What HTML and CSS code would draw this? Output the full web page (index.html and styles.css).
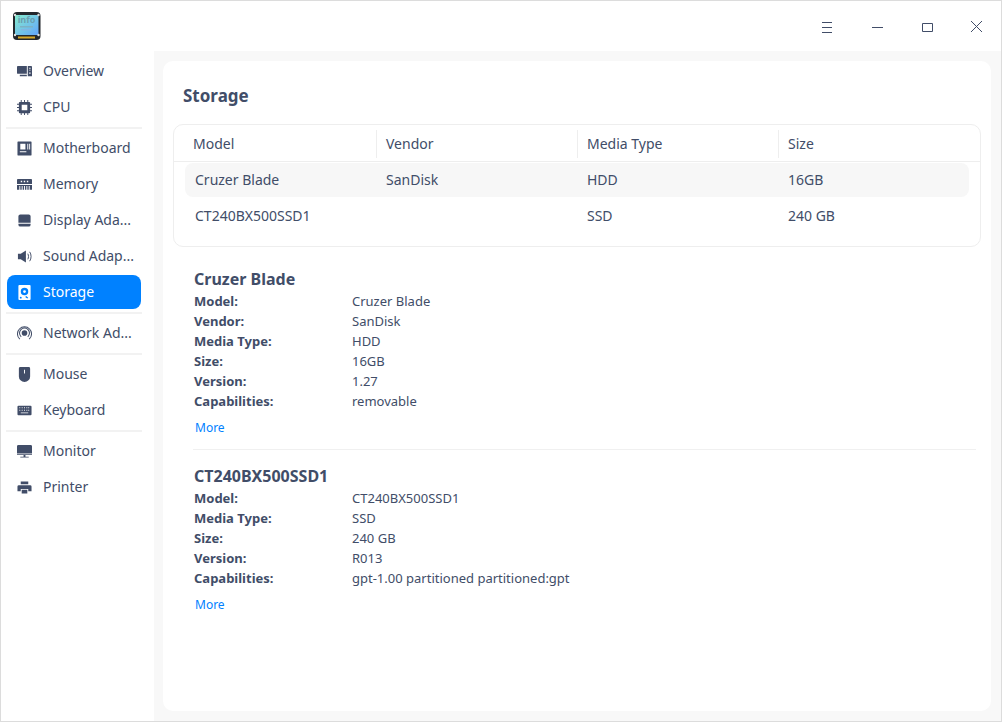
FILE: index.html
```html
<!DOCTYPE html>
<html lang="en">
<head>
    <meta charset="UTF-8">
    <title>Device Manager</title>
    <link rel="stylesheet" href="styles.css">
</head>
<body>
    <div class="window">
        <header class="titlebar">
            <svg class="app-icon" width="30" height="30" viewBox="0 0 30 30">
                <defs>
                    <linearGradient id="screen" x1="0" y1="0" x2="1" y2="1">
                        <stop offset="0" stop-color="#86ecd0"/>
                        <stop offset="1" stop-color="#62a4fb"/>
                    </linearGradient>
                </defs>
                <rect x="1" y="1" width="27.500" height="28" rx="4" fill="#23272c"/>
                <rect x="3" y="4" width="23.500" height="20" fill="url(#screen)"/>
                <text x="14.500" y="12" text-anchor="middle" class="app-icon-text">info</text>
                <rect x="8" y="15" width="13" height="1.500" fill="#7db2c4"/>
                <rect x="9" y="18" width="10" height="1.500" fill="#82b6e2"/>
                <rect x="6" y="25.500" width="17" height="2" fill="#d9a928"/>
                <circle cx="3" cy="4" r="1.200" fill="#ddd"/>
                <circle cx="26.500" cy="4" r="1.200" fill="#ddd"/>
                <circle cx="3" cy="24" r="1.200" fill="#ddd"/>
                <circle cx="26.500" cy="24" r="1.200" fill="#ddd"/>
            </svg>
            <div class="window-buttons">
                <button class="win-btn">
                    <svg width="16" height="16" viewBox="0 0 16 16"><path d="M4 4.500h10M4 9.500h10M4 14.500h10" class="win-line"/></svg>
                </button>
                <button class="win-btn">
                    <svg width="16" height="16" viewBox="0 0 16 16"><path d="M4 9.500h11" class="win-line"/></svg>
                </button>
                <button class="win-btn">
                    <svg width="16" height="16" viewBox="0 0 16 16"><path d="M4.500 5.500h10v8h-10z" class="win-line"/></svg>
                </button>
                <button class="win-btn">
                    <svg width="16" height="16" viewBox="0 0 16 16"><path d="M3 3l11 11M14 3L3 14" class="win-line"/></svg>
                </button>
            </div>
        </header>
        <div class="body">
            <nav class="sidebar">
                <a class="nav-item">
                    <svg class="nav-icon" viewBox="0 0 16 16"><path fill-rule="evenodd" d="M0 3a1 1 0 0 1 1-1h9.500v8.500H1a1 1 0 0 1-1-1zM3 11.500h7.500v1.500H3zM11.500 2H15a1 1 0 0 1 1 1v10h-4.500zm1.500 2v1h1.500V4zm0 2v1h1.500V6zm0 3v1.500h1.500V9z"/></svg>
                    <span>Overview</span>
                </a>
                <a class="nav-item">
                    <svg class="nav-icon" viewBox="0 0 16 16"><path fill-rule="evenodd" d="M3 2h10a1 1 0 0 1 1 1v10a1 1 0 0 1-1 1H3a1 1 0 0 1-1-1V3a1 1 0 0 1 1-1zm2 3v6h6V5zM4 0h1v2H4zM7.500 0h1v2h-1zM11 0h1v2h-1zM4 14h1v2H4zM7.500 14h1v2h-1zM11 14h1v2h-1zM0 4h2v1H0zM0 7.500h2v1H0zM0 11h2v1H0zM14 4h2v1h-2zM14 7.500h2v1h-2zM14 11h2v1h-2z"/></svg>
                    <span>CPU</span>
                </a>
                <div class="nav-sep"></div>
                <a class="nav-item">
                    <svg class="nav-icon" viewBox="0 0 16 16"><path fill-rule="evenodd" d="M1 .500h14a.5.500 0 0 1 .500.500v14a.5.500 0 0 1-.500.500H1a.5.500 0 0 1-.500-.500V1A.5.500 0 0 1 1 .500zM3.500 3v6H9V3zM11 3v6h1V3zm2 0v6h1V3zM3 11v1h7v-1z"/></svg>
                    <span>Motherboard</span>
                </a>
                <a class="nav-item">
                    <svg class="nav-icon" viewBox="0 0 16 16"><path fill-rule="evenodd" d="M1 2h14a1 1 0 0 1 1 1v10.500H0V3a1 1 0 0 1 1-1zm3 2v1.500h1.500V4zm3.200 0v1.500h1.500V4zm3.300 0v1.500H12V4zM0 7.500v1h16v-1zm2.500 2v4h1v-4zm2.500 0v4h1v-4zm2.500 0v4h1v-4zm2.500 0v4h1v-4zm2.500 0v4h1v-4z"/></svg>
                    <span>Memory</span>
                </a>
                <a class="nav-item">
                    <svg class="nav-icon" viewBox="0 0 16 16"><path fill-rule="evenodd" d="M3.500 1.500h9a2 2 0 0 1 2 2v9a2 2 0 0 1-2 2h-9a2 2 0 0 1-2-2v-9a2 2 0 0 1 2-2zM1.500 10.500v1h13v-1z"/></svg>
                    <span>Display Ada...</span>
                </a>
                <a class="nav-item">
                    <svg class="nav-icon" viewBox="0 0 16 16"><path d="M1 5h3l5.500-3.500v13L4 11H1z"/><path d="M11.500 5c1 1.500 1 4.500 0 6M13.500 3c2 2.500 2 7.500 0 10" fill="none" stroke="#414d68"/></svg>
                    <span>Sound Adap...</span>
                </a>
                <a class="nav-item active">
                    <svg class="nav-icon" viewBox="0 0 16 16"><path fill-rule="evenodd" d="M2.500 0h11a1 1 0 0 1 1 1v14a1 1 0 0 1-1 1h-11a1 1 0 0 1-1-1V1a1 1 0 0 1 1-1zM8 3a4 4 0 0 0 0 8 4 4 0 0 0 0-8zm0 2.500a1.500 1.500 0 1 1 0 3 1.500 1.500 0 0 1 0-3zM4 12.500a1 1 0 1 0 0 2 1 1 0 0 0 0-2zm5 .500l2 1.500 1-1-2.500-2z"/></svg>
                    <span>Storage</span>
                </a>
                <div class="nav-sep"></div>
                <a class="nav-item">
                    <svg class="nav-icon" viewBox="0 0 16 16"><circle cx="8" cy="7.500" r="3"/><path d="M4.500 11.500a5.300 5.300 0 1 1 7 0M3 14a7.500 7.500 0 1 1 10 0" fill="none" stroke="#414d68" stroke-width="1.100"/></svg>
                    <span>Network Ad...</span>
                </a>
                <div class="nav-sep"></div>
                <a class="nav-item">
                    <svg class="nav-icon" viewBox="0 0 16 16"><path fill-rule="evenodd" d="M3.500 0h9A1.500 1.500 0 0 1 14 1.500V10a6 6 0 0 1-12 0V1.500A1.500 1.500 0 0 1 3.500 0zM7.500 3v4h1V3z"/></svg>
                    <span>Mouse</span>
                </a>
                <a class="nav-item">
                    <svg class="nav-icon" viewBox="0 0 16 16"><path fill-rule="evenodd" d="M1.500 3h13a1 1 0 0 1 1 1v8a1 1 0 0 1-1 1h-13a1 1 0 0 1-1-1V4a1 1 0 0 1 1-1zm1 1.500v1h1v-1zm2.500 0v1h1v-1zm2.500 0v1h1v-1zm2.500 0v1h1v-1zm2 0v1h1v-1zM2.500 7.200v1h1v-1zm2.500 0v1h1v-1zm2.500 0v1h1v-1zm2.500 0v1h1v-1zm2 0v1h1v-1zM4 10v1h8v-1z"/></svg>
                    <span>Keyboard</span>
                </a>
                <div class="nav-sep"></div>
                <a class="nav-item">
                    <svg class="nav-icon" viewBox="0 0 16 16"><path d="M1.500 1h13A1.500 1.500 0 0 1 16 2.500V10H0V2.500A1.500 1.500 0 0 1 1.500 1zM0 11h16v.800H0zM7 11.800h2v1.700H7zM3.500 13.500h9v1h-9z"/></svg>
                    <span>Monitor</span>
                </a>
                <a class="nav-item">
                    <svg class="nav-icon" viewBox="0 0 16 16"><path fill-rule="evenodd" d="M4 1.500h8v3H4zM2 5.500h12A1.500 1.500 0 0 1 15.500 7v5H12V9.500H4V12H.5V7A1.500 1.500 0 0 1 2 5.500zM5 10.500h6v4H5z"/></svg>
                    <span>Printer</span>
                </a>
            </nav>
            <main class="main">
                <div class="card">
                    <h1 class="page-title">Storage</h1>
                    <div class="table">
                        <div class="row head">
                            <div class="cell">Model</div>
                            <div class="cell">Vendor</div>
                            <div class="cell">Media Type</div>
                            <div class="cell">Size</div>
                        </div>
                        <div class="row data selected">
                            <div class="cell">Cruzer Blade</div>
                            <div class="cell">SanDisk</div>
                            <div class="cell">HDD</div>
                            <div class="cell">16GB</div>
                        </div>
                        <div class="row data">
                            <div class="cell">CT240BX500SSD1</div>
                            <div class="cell"></div>
                            <div class="cell">SSD</div>
                            <div class="cell">240 GB</div>
                        </div>
                    </div>
                    <section class="device">
                        <h2>Cruzer Blade</h2>
                        <dl>
                            <dt>Model:</dt><dd>Cruzer Blade</dd>
                            <dt>Vendor:</dt><dd>SanDisk</dd>
                            <dt>Media Type:</dt><dd>HDD</dd>
                            <dt>Size:</dt><dd>16GB</dd>
                            <dt>Version:</dt><dd>1.27</dd>
                            <dt>Capabilities:</dt><dd>removable</dd>
                        </dl>
                        <a class="more">More</a>
                    </section>
                    <section class="device">
                        <h2>CT240BX500SSD1</h2>
                        <dl>
                            <dt>Model:</dt><dd>CT240BX500SSD1</dd>
                            <dt>Media Type:</dt><dd>SSD</dd>
                            <dt>Size:</dt><dd>240 GB</dd>
                            <dt>Version:</dt><dd>R013</dd>
                            <dt>Capabilities:</dt><dd>gpt-1.00 partitioned partitioned:gpt</dd>
                        </dl>
                        <a class="more">More</a>
                    </section>
                </div>
            </main>
        </div>
    </div>
</body>
</html>
```

FILE: styles.css
```css
* {
    box-sizing: border-box;
}
body {
    margin: 0;
    height: 722px;
    overflow: hidden;
    font-family: "Noto Sans", sans-serif;
    color: #414d68;
    background-color: #fff;
}
.window {
    height: 722px;
    border: 1px solid #dcdcdc;
    display: flex;
    flex-direction: column;
}
.titlebar {
    height: 50px;
    flex-shrink: 0;
    display: flex;
    align-items: center;
    justify-content: space-between;
    padding-left: 11px;
    background-color: #fff;
}
.app-icon {
    display: block;
}
.app-icon-text {
    font-size: 9px;
    font-weight: 700;
    fill: #6b9fb0;
}
.window-buttons {
    display: flex;
}
.win-btn {
    width: 50px;
    height: 50px;
    padding: 0;
    border: none;
    background: none;
    display: flex;
    align-items: center;
    justify-content: center;
}
.win-line {
    fill: none;
    stroke: #414d68;
    stroke-width: 1;
}
.body {
    flex: 1;
    display: flex;
    min-height: 0;
}
.sidebar {
    width: 153px;
    flex-shrink: 0;
    display: flex;
    flex-direction: column;
    padding: 2px 11px 0 5px;
    background-color: #fff;
}
.nav-item {
    height: 34px;
    margin: 1px;
    width: 134px;
    flex-shrink: 0;
    display: flex;
    align-items: center;
    gap: 11px;
    padding-left: 10px;
    border-radius: 8px;
    font-size: 14px;
    white-space: nowrap;
}
.nav-item span {
    padding-bottom: 2px;
}
.nav-icon {
    width: 15px;
    height: 15px;
    flex-shrink: 0;
    fill: #414d68;
}
.nav-item.active {
    background-color: #0081ff;
    color: #fff;
}
.nav-item.active .nav-icon {
    fill: #fff;
}
.nav-sep {
    height: 5px;
    flex-shrink: 0;
    padding: 2px 0 1px;
    width: 136px;
}
.nav-sep::after {
    content: "";
    display: block;
    height: 2px;
    background-color: #f2f2f2;
}
.main {
    flex: 1;
    padding: 10px 10px 10px 9px;
    background-color: #f8f8f8;
}
.card {
    height: 100%;
    padding: 20px 10px 0;
    border-radius: 10px;
    background-color: #fff;
}
.page-title {
    margin: 0 0 13px 10px;
    font-size: 17px;
    line-height: 30px;
    font-weight: 700;
}
.table {
    height: 123px;
    border: 1px solid #eeeeee;
    border-radius: 10px;
    font-size: 14px;
}
.row {
    display: grid;
    grid-template-columns: 202px 201px 201px 1fr;
}
.row.head {
    height: 37px;
    margin-bottom: 1px;
    padding-top: 2px;
    align-items: center;
    border-bottom: 1px solid #eeeeee;
}
.row.head .cell {
    padding-left: 19px;
    line-height: 28px;
}
.row.head .cell + .cell {
    padding-left: 9px;
    border-left: 1px solid #eeeeee;
}
.row.data {
    height: 34px;
    margin: 0 11px 2px;
    padding-bottom: 2px;
    align-items: center;
    border-radius: 8px;
    grid-template-columns: 201px 201px 201px 1fr;
}
.row.data .cell:first-child {
    padding-left: 10px;
}
.row.selected {
    background-color: #f7f7f7;
}
.device {
    margin: 20px 5px 0 20px;
    padding: 0 0 11px;
}
.device + .device {
    margin-top: 0;
    padding-top: 14px;
    border-top: 1px solid #f0f0f0;
}
.device h2 {
    margin: 0 0 0 1px;
    font-size: 16px;
    line-height: 24px;
    font-weight: 700;
}
.device dl {
    margin: 0 0 0 1px;
    display: grid;
    grid-template-columns: 158px 1fr;
    font-size: 13px;
    line-height: 20px;
}
.device dt {
    font-weight: 700;
}
.device dd {
    margin: 0;
}
.more {
    display: block;
    margin: 7px 0 0 2px;
    font-size: 12px;
    line-height: 20px;
    color: #0081ff;
}
```
